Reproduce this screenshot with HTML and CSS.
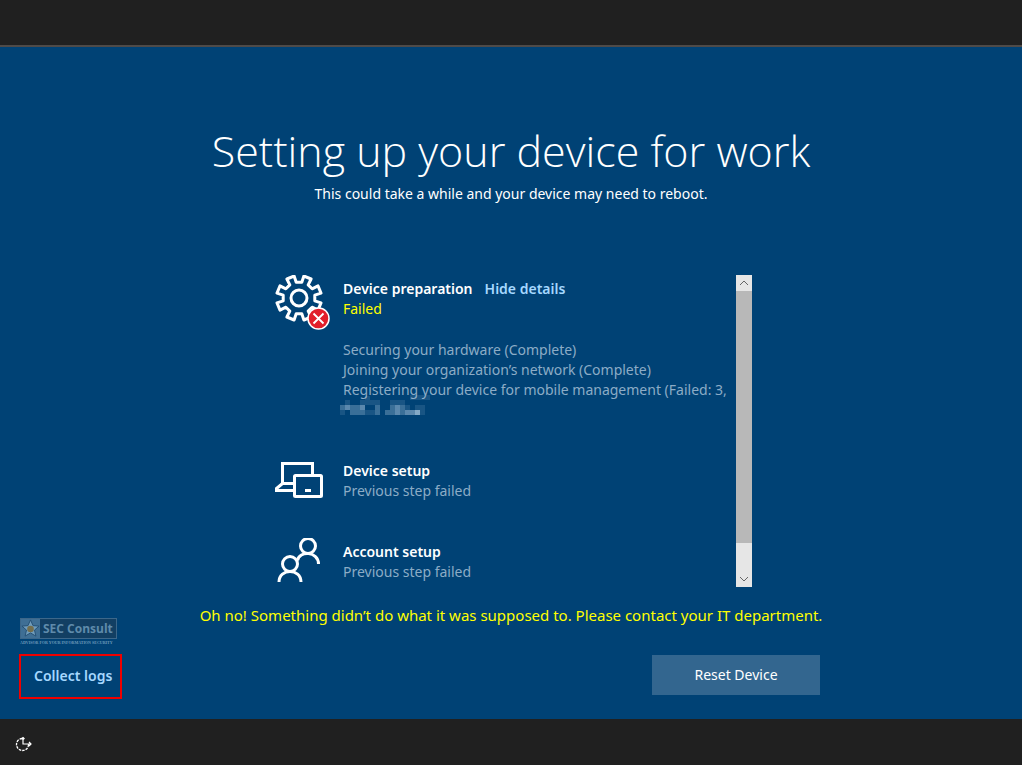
FILE: index.html
```html
<!DOCTYPE html>
<html lang="en">
  <head>
    <meta charset="UTF-8" />
    <meta name="viewport" content="width=device-width, initial-scale=1.0" />
    <title>Setting up your device for work</title>
    <link rel="stylesheet" href="styles.css">
  </head>
  <body>
    <div class="top-bar"></div>
    <main class="setup">
      <h1>Setting up your device for work</h1>
      <p class="subtitle">This could take a while and your device may need to reboot.</p>

      <div class="panel">
        <div class="steps">
          <section class="step">
            <svg class="step-icon" viewBox="0 1 56 56" fill="none" stroke="#fff" stroke-width="3">
              <path stroke-linejoin="round" d="M26.8 8.2L28.9 2L36.1 5L33.2 10.9L37.1 14.8L43 11.9L46 19.1L39.8 21.2V26.8L46 28.9L43 36.1L37.1 33.2L33.2 37.1L36.1 43L28.9 46L26.8 39.8H21.2L19.1 46L11.9 43L14.8 37.1L10.9 33.2L5 36.1L2 28.9L8.2 26.8V21.2L2 19.1L5 11.9L10.9 14.8L14.8 10.9L11.9 5L19.1 2L21.2 8.2Z" />
              <circle cx="24" cy="24" r="8" />
              <circle cx="43.500" cy="44.500" r="10.500" fill="#e11f2b" stroke-width="1.500" />
              <path stroke-width="1.800" d="M38.500 39.500L48.500 49.500M48.500 39.500L38.500 49.500" />
            </svg>
            <div class="step-text">
              <div class="step-head">
                <h2>Device preparation</h2>
                <a href="#details">Hide details</a>
              </div>
              <p class="failed">Failed</p>
              <div class="details" id="details">
                <p>Securing your hardware (Complete)</p>
                <p>Joining your organization’s network (Complete)</p>
                <p>Registering your device for mobile management (Failed: 3,</p>
                <svg class="redacted" viewBox="0 0 90 20" shape-rendering="crispEdges" fill="#a5c3db">
                  <path opacity=".15" d="M25 1h5v5h-5zM70 0h20v5H70zM5 5h5v5H5zM20 5h20v5H20zM50 5h15v5H50zM0 15h5v5H0zM25 15h10v5H25zM65 10h5v5h-5zM75 10h10v5H75zM80 15h5v5h-5z" />
                  <path opacity=".35" d="M0 10h5v5H0zM10 10h10v5H10zM10 15h15v5H10zM35 10h5v10h-5zM45 15h10v5H45zM50 10h5v5h-5zM60 10h5v10h-5z" />
                  <path opacity=".55" d="M5 10h5v5H5zM20 10h5v5h-5zM55 10h5v10h-5zM65 15h10v5H65z" />
                  <path opacity=".8" d="M75 15h5v5h-5z" />
                </svg>
              </div>
            </div>
          </section>

          <section class="step">
            <svg class="step-icon" viewBox="0 0 56 56" fill="none" stroke="#fff" stroke-width="3">
              <path d="M7.500 26V6.500H37.500V17M7 26.500H18M7.500 26.500L1.500 31.500V33.500H18" />
              <rect x="19.500" y="18.500" width="27" height="21" rx="1" />
              <path d="M30 33.500H36" />
            </svg>
            <div class="step-text">
              <h2>Device setup</h2>
              <p>Previous step failed</p>
            </div>
          </section>

          <section class="step">
            <svg class="step-icon" viewBox="0 0 56 56" fill="none" stroke="#fff" stroke-width="3">
              <circle cx="33" cy="8" r="7.500" />
              <circle cx="15" cy="26" r="7.500" />
              <path d="M4 44C4 30 26 30 26 44M22.500 22.500C24 12.500 43.500 13 43.500 26" />
            </svg>
            <div class="step-text">
              <h2>Account setup</h2>
              <p>Previous step failed</p>
            </div>
          </section>
        </div>

        <div class="scrollbar">
          <button type="button" aria-label="Scroll up">
            <svg viewBox="0 0 16 16" fill="none" stroke="#666"><path d="M4 10L8 6L12 10" /></svg>
          </button>
          <div class="thumb"></div>
          <button type="button" aria-label="Scroll down">
            <svg viewBox="0 0 16 16" fill="none" stroke="#666"><path d="M4 6L8 10L12 6" /></svg>
          </button>
        </div>
      </div>

      <p class="error">Oh no! Something didn’t do what it was supposed to. Please contact your IT department.</p>

      <div class="footer">
        <div class="footer-left">
          <div class="logo">
            <div class="logo-box">
              <svg viewBox="0 0 20 20">
                <rect width="20" height="20" fill="#3f6f95" />
                <path fill="#709cbb" stroke="#244f74" d="M10 1L12.700 7L19 7.500L14.200 11.700L15.700 18L10 14.700L4.300 18L5.800 11.700L1 7.500L7.300 7Z" />
                <circle cx="10" cy="10.500" r="3.500" fill="#746f4e" />
              </svg>
              <span>SEC Consult</span>
            </div>
            <svg class="tagline" viewBox="0 0 97 5"><text x="0" y="4">ADVISOR FOR YOUR INFORMATION SECURITY</text></svg>
          </div>
          <a class="collect" href="#logs">Collect logs</a>
        </div>
        <button type="button" class="reset">Reset Device</button>
      </div>
    </main>
    <div class="bottom-bar">
      <button type="button" aria-label="Ease of access">
        <svg viewBox="0 0 18 16" fill="none" stroke="#fff">
          <circle cx="7.500" cy="8.500" r="6" stroke-width="1.300" stroke-dasharray="2.500 1" />
          <path fill="#202020" stroke="none" d="M9 0H16V8H9Z" />
          <path stroke-width="1.200" d="M8 1V8H16M6.500 3L8 1.500L9.500 3M14 6L16 8L14 10" />
        </svg>
      </button>
    </div>
  </body>
</html>
```
FILE: styles.css
```css
* {
  margin: 0;
  padding: 0;
  box-sizing: border-box;
}
body {
  display: flex;
  flex-direction: column;
  min-height: 100vh;
  background-color: #004275;
  color: #fff;
  font-family: "Noto Sans", "Open Sans", sans-serif;
  font-size: 14px;
  line-height: 20px;
}
button {
  border: none;
  font: inherit;
  color: inherit;
  cursor: pointer;
}
svg {
  display: block;
}
a {
  color: #a6d8ff;
  font-weight: 600;
  text-decoration: none;
}
.top-bar {
  height: 47px;
  background-color: #202020;
  border-bottom: 2px solid #4e4a48;
}
.setup {
  flex: 1;
  display: flex;
  flex-direction: column;
  align-items: center;
  padding: 74px 20px 20px;
}
h1 {
  margin-bottom: 3px;
  font-family: "Open Sans", sans-serif;
  font-size: 43px;
  font-weight: 300;
  line-height: 60px;
}
h2 {
  font-size: 14px;
  font-weight: 600;
}
.panel {
  display: flex;
  width: 482px;
  max-width: 100%;
  margin-top: 71px;
  padding-left: 5px;
}
.steps {
  flex: 1;
  display: flex;
  flex-direction: column;
}
.step {
  display: flex;
  gap: 12px;
  height: 81px;
}
.step:first-child {
  height: 182px;
}
.step:last-child {
  height: 49px;
}
.step-icon {
  flex: none;
  width: 56px;
  height: 56px;
}
.step-text {
  padding-top: 4px;
  color: #8cacc6;
  white-space: nowrap;
}
.step-text h2 {
  color: #fff;
}
.step-head {
  display: flex;
  gap: 12px;
}
.step-text .failed {
  color: #ff0;
}
.details {
  margin-top: 21px;
}
.redacted {
  width: 90px;
  height: 20px;
  margin: -5px 0 0 -3px;
}
.scrollbar {
  display: flex;
  flex-direction: column;
  justify-content: space-between;
  width: 16px;
  background-color: #e6e6e6;
}
.scrollbar button {
  width: 16px;
  height: 16px;
  background-color: #e6e6e6;
}
.thumb {
  height: 252px;
  margin-bottom: auto;
  background-color: #b8b8b8;
}
.error {
  margin-top: 18px;
  color: #ff0;
  font-size: 15px;
}
.footer {
  display: flex;
  justify-content: space-between;
  align-items: flex-end;
  width: 100%;
  margin-top: -7px;
}
.logo {
  width: 97px;
}
.logo-box {
  display: flex;
  align-items: center;
  gap: 3px;
  height: 21px;
  border: 1px solid #3c678a;
  background-color: #123f63;
  color: #5f8bab;
  font-family: "Open Sans", sans-serif;
  font-size: 12px;
  font-weight: 700;
  white-space: nowrap;
}
.logo-box svg {
  width: 19px;
  height: 19px;
}
.tagline {
  width: 97px;
  height: 5px;
  margin-top: 1px;
  fill: #6f9bbb;
  font-family: "Liberation Serif", serif;
  font-size: 4px;
  font-weight: 700;
}
.collect {
  display: block;
  width: 103px;
  margin: 9px 0 0 -1px;
  padding: 10px 0 11px 13px;
  border: 2px solid #f00000;
}
.reset {
  width: 168px;
  height: 40px;
  margin: 0 182px 4px 0;
  background-color: #33668f;
}
.bottom-bar {
  display: flex;
  align-items: center;
  height: 46px;
  padding: 4px 15px 0;
  background-color: #202020;
}
.bottom-bar button {
  background: none;
}
.bottom-bar svg {
  width: 18px;
  height: 16px;
}
```
